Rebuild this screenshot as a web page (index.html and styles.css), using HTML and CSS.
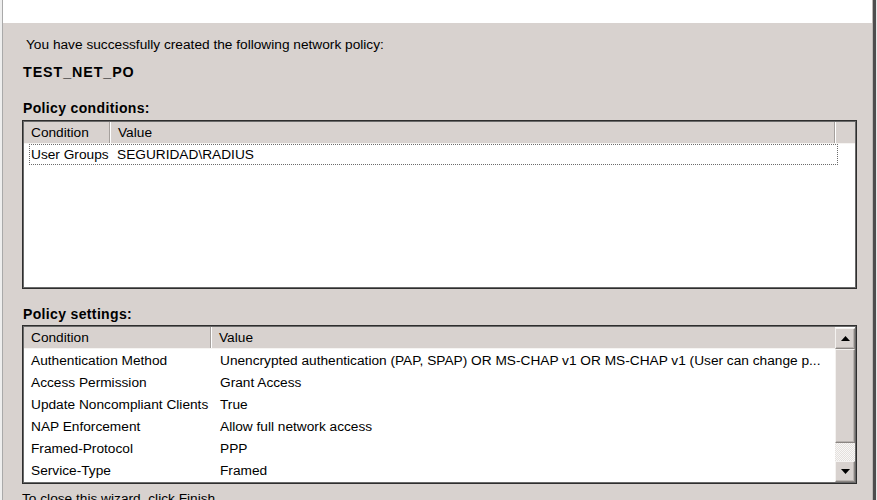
FILE: index.html
```html
<!DOCTYPE html>
<html>
<head>
<meta charset="utf-8">
<link rel="stylesheet" href="styles.css">
</head>
<body>
<div class="frame">
  <div class="main">
    <div class="banner"></div>
    <div class="content">
      <div class="intro">You have successfully created the following network policy:</div>
      <div class="policy-name">TEST_NET_PO</div>
      <div class="section-title first">Policy conditions:</div>
      <div class="listbox conditions">
        <div class="list-header">
          <div class="hcell c1">Condition</div>
          <div class="hcell c2">Value</div>
          <div class="hfill"></div>
        </div>
        <div class="list-body">
          <div class="row focused">
            <div class="cell c1">User Groups</div>
            <div class="cell c2">SEGURIDAD\RADIUS</div>
          </div>
        </div>
      </div>
      <div class="section-title second">Policy settings:</div>
      <div class="listbox settings">
        <div class="list-main">
          <div class="list-header">
            <div class="hcell s1">Condition</div>
            <div class="hcell s2">Value</div>
          </div>
          <div class="list-body">
            <div class="row"><div class="cell s1">Authentication Method</div><div class="cell s2">Unencrypted authentication (PAP, SPAP) OR MS-CHAP v1 OR MS-CHAP v1 (User can change p...</div></div>
            <div class="row"><div class="cell s1">Access Permission</div><div class="cell s2">Grant Access</div></div>
            <div class="row"><div class="cell s1">Update Noncompliant Clients</div><div class="cell s2">True</div></div>
            <div class="row"><div class="cell s1">NAP Enforcement</div><div class="cell s2">Allow full network access</div></div>
            <div class="row"><div class="cell s1">Framed-Protocol</div><div class="cell s2">PPP</div></div>
            <div class="row"><div class="cell s1">Service-Type</div><div class="cell s2">Framed</div></div>
          </div>
        </div>
        <div class="scrollbar">
          <div class="sb-btn"><svg width="9" height="5" viewBox="0 0 9 5"><polygon points="0,5 9,5 4.5,0" fill="#000"/></svg></div>
          <div class="sb-thumb"></div>
          <div class="sb-track"></div>
          <div class="sb-btn"><svg width="9" height="5" viewBox="0 0 9 5"><polygon points="0,0 9,0 4.5,5" fill="#000"/></svg></div>
        </div>
      </div>
      <div class="closing">To close this wizard, click Finish.</div>
    </div>
  </div>
</div>
</body>
</html>
```
FILE: styles.css
```css
html, body {
  margin: 0;
  padding: 0;
  background: #d8d2cf;
  overflow: hidden;
}
body {
  font-family: "Liberation Sans", Arial, sans-serif;
  font-size: 13.7px;
  color: #000;
}
.frame {
  width: 877px;
  height: 500px;
  display: flex;
  box-sizing: border-box;
  border-left: 2px solid #eeeeee;
  border-right: 1px solid #e8e8e8;
  overflow: hidden;
}
.main {
  flex: 1;
  display: flex;
  flex-direction: column;
  border-left: 1px solid #a9a9a9;
  border-right: 3px solid #4e4e4e;
  box-shadow: inset -1px 0 0 #bdb8b5;
}
.main > *, .content > * {
  flex-shrink: 0;
}
.banner {
  height: 23px;
  background: #fff;
  margin-right: 1px;
}
.content {
  padding: 0 16px 0 19px;
  display: flex;
  flex-direction: column;
}
.intro {
  line-height: 16px;
  margin-top: 14px;
  padding-left: 4px;
}
.policy-name {
  font-weight: bold;
  font-size: 14.3px;
  line-height: 16px;
  margin-top: 11px;
  padding-left: 1px;
  letter-spacing: 0.9px;
}
.section-title {
  font-weight: bold;
  font-size: 14px;
  line-height: 16px;
  padding-left: 1px;
  letter-spacing: 0.35px;
}
.section-title.first { margin-top: 20px; }
.section-title.second { margin-top: 17px; }
.listbox {
  background: #fff;
  border: 1px solid #2e2e2e;
  box-shadow: inset 1px 1px 0 #6a6a6a, inset -1px -1px 0 #6a6a6a;
  padding: 1px;
  display: flex;
  flex-direction: column;
}
.conditions {
  margin-top: 4px;
  height: 169px;
  box-sizing: border-box;
}
.settings {
  margin-top: 3px;
  height: 159px;
  box-sizing: border-box;
  flex-direction: row;
}
.list-main {
  flex: 1;
  display: flex;
  flex-direction: column;
}
.list-header {
  display: flex;
  height: 22px;
  background: #d8d2cf;
  border-bottom: 1px solid #f6f4f2;
  box-sizing: border-box;
  flex-shrink: 0;
}
.hcell {
  line-height: 21px;
  box-sizing: border-box;
  border-right: 1px solid #a5a09d;
  box-shadow: 1px 0 0 #fff;
  white-space: nowrap;
}
.hcell.c1 { width: 86px; padding-left: 7px; }
.hcell.c2 { width: 725px; padding-left: 8px; }
.hfill { flex: 1; }
.hcell.s1 { width: 187px; padding-left: 7px; }
.hcell.s2 { flex: 1; padding-left: 8px; border-right: none; box-shadow: none; }
.list-body {
  flex: 1;
  display: flex;
  flex-direction: column;
}
.row {
  display: flex;
  height: 22px;
  align-items: center;
  white-space: nowrap;
  flex-shrink: 0;
}
.row.focused {
  margin: 0 17px 0 5px;
  height: 21px;
  outline: 1px dotted #6c6c6c;
  outline-offset: -1px;
}
.cell.c1 { width: 88px; padding-left: 2px; box-sizing: border-box; }
.cell.c2 { padding-left: 0; }
.cell.s1 { width: 196px; padding-left: 7px; box-sizing: border-box; }
.cell.s2 { padding-left: 0; }
.scrollbar {
  width: 20px;
  display: flex;
  flex-direction: column;
  margin: 1px 0 0 0;
}
.sb-btn, .sb-thumb {
  background: #d8d2cf;
  box-sizing: border-box;
  border-top: 1px solid #f4f2f0;
  border-left: 1px solid #f4f2f0;
  border-right: 1px solid #8a8582;
  border-bottom: 1px solid #8a8582;
  box-shadow: inset -1px -1px 0 #b9b4b1;
  flex-shrink: 0;
}
.sb-btn {
  height: 21px;
  display: flex;
  align-items: center;
  justify-content: center;
}
.sb-thumb {
  height: 94px;
}
.sb-track {
  flex: 1;
  background-color: #efecea;
  background-image: repeating-conic-gradient(#e4e0dd 0 25%, #f8f7f6 0 50%);
  background-size: 2px 2px;
}
.closing {
  margin-top: 7px;
  line-height: 16px;
  white-space: nowrap;
}
```
